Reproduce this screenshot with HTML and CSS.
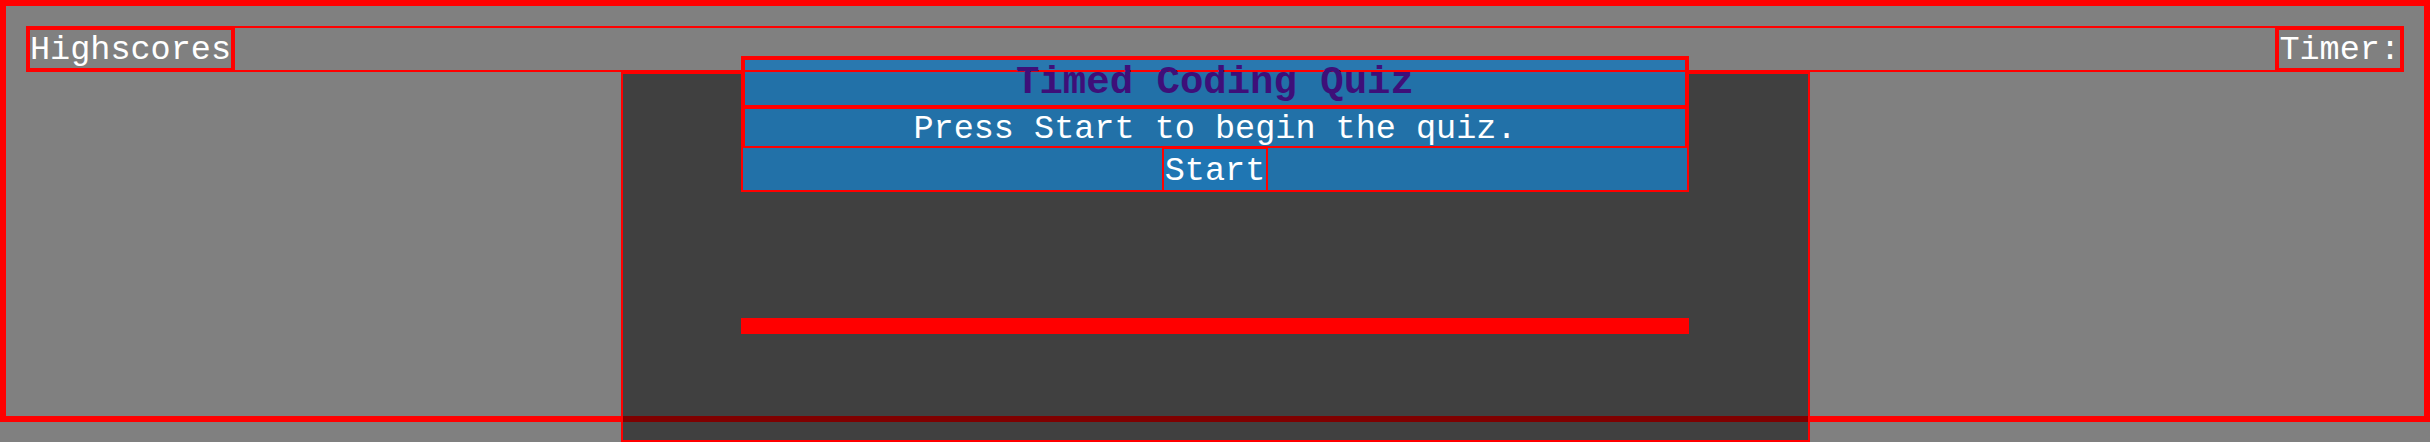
FILE: index.html
```html
<!DOCTYPE html>
<html lang="en">
<head>
<meta charset="utf-8">
<title>Timed Coding Quiz</title>
<link rel="stylesheet" href="styles.css">
</head>
<body>
<div class="frame">
  <header class="topbar">
    <a class="hs">Highscores</a>
    <div class="spacer"></div>
    <div class="timer">Timer:</div>
  </header>
  <main class="panel">
    <section class="card">
      <h1 class="title">Timed Coding Quiz</h1>
      <p class="intro">Press Start to begin the quiz.</p>
      <div class="actions"><button class="start">Start</button></div>
    </section>
    <div class="bar"></div>
  </main>
</div>
</body>
</html>
```
FILE: styles.css
```css
* { box-sizing: border-box; }
html, body { margin: 0; padding: 0; }
body {
  width: 2430px;
  height: 442px;
  overflow: hidden;
  background: #808080;
  color: #fff;
  font-family: "Liberation Mono", "Courier New", monospace;
}
.frame {
  height: 422px;
  border: 6px solid #f00;
  padding: 20px;
}
.topbar {
  display: flex;
  height: 46px;
}
.hs, .timer {
  padding-top: 3px;
  font-size: 33.5px;
  line-height: 35px;
  color: #fff;
  text-decoration: none;
  white-space: nowrap;
}
.hs {
  border: 4px solid #f00;
  border-right-width: 2px;
}
.spacer {
  flex: 1;
  border: 2px solid #f00;
}
.timer {
  border: 4px solid #f00;
  border-left-width: 2px;
}
.panel {
  display: block;
  width: 1189px;
  height: 370px;
  margin: 0 auto;
  border: 2px solid #f00;
  background: rgba(0, 0, 0, 0.5);
}
.card {
  width: 948px;
  margin: -18px auto 0;
  border: 2px solid #f00;
}
.title {
  margin: 0;
  height: 49px;
  padding-top: 2px;
  border: 2px solid #f00;
  background: rgba(31, 119, 180, 0.9);
  color: #3e0f79;
  font-size: 39px;
  font-weight: bold;
  line-height: 43px;
  text-align: center;
}
.intro {
  margin: 0;
  height: 41px;
  padding-top: 3px;
  border: 2px solid #f00;
  background: rgba(31, 119, 180, 0.9);
  font-size: 33.5px;
  line-height: 34px;
  text-align: center;
}
.actions {
  display: flex;
  justify-content: center;
  align-items: flex-start;
  height: 42px;
  background: rgba(31, 119, 180, 0.9);
}
.start {
  height: 45px;
  margin: -1px 0 0;
  padding: 3px 1px 0;
  border: 2px solid #f00;
  background: rgba(31, 119, 180, 0.9);
  color: #fff;
  font-family: inherit;
  font-size: 33.5px;
  line-height: 38px;
}
.bar {
  width: 948px;
  height: 16px;
  margin: 126px auto 0;
  background: #f00;
}
```
